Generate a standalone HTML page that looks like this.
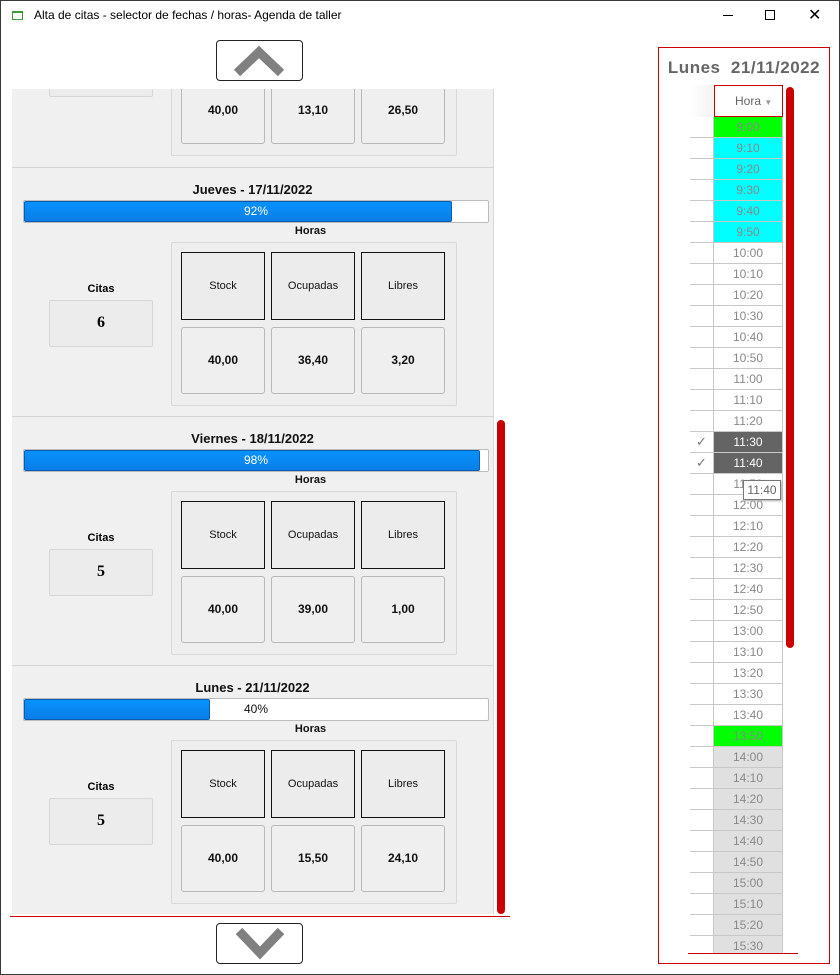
<!DOCTYPE html>
<html><head><meta charset="utf-8"><style>
*{box-sizing:border-box;margin:0;padding:0}
body{width:840px;height:975px;background:#fff;font-family:"Liberation Sans",sans-serif;position:relative;overflow:hidden}
.a{position:absolute}
.win{left:0;top:0;width:840px;height:975px;border:1px solid #3a3a3a}
.ttl{left:34px;top:8px;font-size:12px;color:#000}
.nav{width:87px;height:41px;border:1px solid #222;border-radius:4px;background:#fff}
.panel{left:12px;top:89px;width:481px;height:825px;background:#f0f0f0;overflow:hidden}
.blk{position:absolute;left:0;width:481px;height:249px;border-top:1px solid #d4d4d4}
.t{position:absolute;left:0;width:481px;text-align:center;font-weight:bold;font-size:13px;color:#111}
.bar{position:absolute;left:11px;width:466px;height:23px;border:1px solid #bcbcbc;background:#fff;border-radius:2px;overflow:hidden}
.fill{position:absolute;left:0;top:0;bottom:0;background:linear-gradient(#0892ff,#0a7ee6);border:1px solid #0a5cb0;border-radius:2px}
.pct{position:absolute;left:0;right:0;top:3px;text-align:center;font-size:12px}
.grp{position:absolute;left:159px;width:286px;height:164px;border:1px solid #d8d8d8;border-radius:2px;background:#eeeeee}
.b1{position:absolute;width:84px;height:68px;border:1px solid #111;background:#ececec;font-size:11px;text-align:center;line-height:66px;color:#111}
.b2{position:absolute;width:84px;height:67px;border:1px solid #b8b8b8;border-radius:3px;background:#efefef;font-size:12px;font-weight:bold;text-align:center;line-height:65px;color:#111}
.cl{position:absolute;left:37px;width:104px;text-align:center;font-size:11px;font-weight:bold}
.cb{position:absolute;left:37px;width:104px;height:47px;border:1px solid #d6d6d6;border-radius:2px;background:#ececec;text-align:center;line-height:44px;font-size:16px;font-weight:bold;font-family:"Liberation Serif",serif}
.rp{left:658px;top:47px;width:172px;height:917px;border:1px solid #cc0000}
.rt{left:658px;top:58px;width:172px;text-align:center;font-weight:bold;font-size:17px;color:#666;letter-spacing:0.5px}
.row{position:absolute;left:690px;width:93px;height:21px}
.rh{position:absolute;left:0;top:0;width:24px;height:21px;border-bottom:1px solid #c8c8c8;border-right:1px solid #c8c8c8;background:#fff;color:#777;font-size:13px;text-align:center;line-height:20px}
.rc{position:absolute;left:24px;top:0;width:69px;height:21px;border-bottom:1px solid #c8c8c8;border-right:1px solid #c8c8c8;text-align:center;font-size:12px;line-height:20px;color:#888}
</style></head><body>
<div class="a win"></div>
<div class="a" style="left:12px;top:11px;width:11px;height:9px;border:1px solid #3a9a3a;border-top-width:2px"></div>
<div class="a ttl">Alta de citas - selector de fechas / horas- Agenda de taller</div>
<div class="a" style="left:723px;top:15px;width:10px;height:1px;background:#000"></div>
<div class="a" style="left:765px;top:10px;width:10px;height:10px;border:1px solid #000"></div>
<div class="a" style="left:808px;top:5px;font-size:16px;color:#000">✕</div>

<div class="a nav" style="left:216px;top:40px"><svg width="85" height="39"><polyline points="20,32 42,11 64,32" fill="none" stroke="#808080" stroke-width="9"/></svg></div>

<div class="a panel">
 <div class="blk" style="top:-171px;border-top:none">
  <div class="grp" style="top:74px"></div>
  <div class="cb" style="top:132px"></div>
  <div class="b2" style="left:169px;top:159px">40,00</div><div class="b2" style="left:259px;top:159px">13,10</div><div class="b2" style="left:349px;top:159px">26,50</div>
 </div>
 <div class="blk" style="top:78px">
  <div class="t" style="top:14px">Jueves - 17/11/2022</div>
  <div class="bar" style="top:32px"><div class="fill" style="width:428px"></div><div class="pct" style="color:#fff">92%</div></div>
  <div class="t" style="top:57px;font-size:11px;left:58px">Horas</div>
  <div class="grp" style="top:74px"></div>
  <div class="b1" style="left:169px;top:84px">Stock</div><div class="b1" style="left:259px;top:84px">Ocupadas</div><div class="b1" style="left:349px;top:84px">Libres</div>
  <div class="b2" style="left:169px;top:159px">40,00</div><div class="b2" style="left:259px;top:159px">36,40</div><div class="b2" style="left:349px;top:159px">3,20</div>
  <div class="cl" style="top:115px">Citas</div><div class="cb" style="top:132px">6</div>
 </div>
 <div class="blk" style="top:327px">
  <div class="t" style="top:14px">Viernes - 18/11/2022</div>
  <div class="bar" style="top:32px"><div class="fill" style="width:456px"></div><div class="pct" style="color:#fff">98%</div></div>
  <div class="t" style="top:57px;font-size:11px;left:58px">Horas</div>
  <div class="grp" style="top:74px"></div>
  <div class="b1" style="left:169px;top:84px">Stock</div><div class="b1" style="left:259px;top:84px">Ocupadas</div><div class="b1" style="left:349px;top:84px">Libres</div>
  <div class="b2" style="left:169px;top:159px">40,00</div><div class="b2" style="left:259px;top:159px">39,00</div><div class="b2" style="left:349px;top:159px">1,00</div>
  <div class="cl" style="top:115px">Citas</div><div class="cb" style="top:132px">5</div>
 </div>
 <div class="blk" style="top:576px">
  <div class="t" style="top:14px">Lunes - 21/11/2022</div>
  <div class="bar" style="top:32px"><div class="fill" style="width:186px"></div><div class="pct" style="color:#111">40%</div></div>
  <div class="t" style="top:57px;font-size:11px;left:58px">Horas</div>
  <div class="grp" style="top:74px"></div>
  <div class="b1" style="left:169px;top:84px">Stock</div><div class="b1" style="left:259px;top:84px">Ocupadas</div><div class="b1" style="left:349px;top:84px">Libres</div>
  <div class="b2" style="left:169px;top:159px">40,00</div><div class="b2" style="left:259px;top:159px">15,50</div><div class="b2" style="left:349px;top:159px">24,10</div>
  <div class="cl" style="top:115px">Citas</div><div class="cb" style="top:132px">5</div>
 </div>
</div>
<div class="a" style="left:493px;top:89px;width:1px;height:825px;background:#d8d8d8"></div>
<div class="a" style="left:497px;top:420px;width:8px;height:494px;background:#cc0000;border-radius:4px"></div>
<div class="a" style="left:10px;top:916px;width:500px;height:1px;background:#cc0000"></div>
<div class="a nav" style="left:216px;top:923px"><svg width="85" height="39"><polyline points="22,7 43,29 64,7" fill="none" stroke="#808080" stroke-width="9"/></svg></div>

<div class="a rp"></div>
<div class="a rt">Lunes&nbsp; 21/11/2022</div>
<div class="a" style="left:690px;top:85px;width:25px;height:32px;background:linear-gradient(90deg,#fff,#f2f2f2)"></div>
<div class="a" style="left:714px;top:85px;width:69px;height:32px;border:1px solid #cc0000;background:#fff;font-size:12px;color:#666;line-height:30px;padding-left:20px">Hora <span style="font-size:8px;color:#999">▼</span></div>
<div class="a" style="left:786px;top:87px;width:8px;height:561px;background:#cc0000;border-radius:4px"></div>
<div class="row" style="top:117px"><div class="rh"></div><div class="rc" style="background:#00ff00">9:00</div></div>
<div class="row" style="top:138px"><div class="rh"></div><div class="rc" style="background:#00ffff">9:10</div></div>
<div class="row" style="top:159px"><div class="rh"></div><div class="rc" style="background:#00ffff">9:20</div></div>
<div class="row" style="top:180px"><div class="rh"></div><div class="rc" style="background:#00ffff">9:30</div></div>
<div class="row" style="top:201px"><div class="rh"></div><div class="rc" style="background:#00ffff">9:40</div></div>
<div class="row" style="top:222px"><div class="rh"></div><div class="rc" style="background:#00ffff">9:50</div></div>
<div class="row" style="top:243px"><div class="rh"></div><div class="rc">10:00</div></div>
<div class="row" style="top:264px"><div class="rh"></div><div class="rc">10:10</div></div>
<div class="row" style="top:285px"><div class="rh"></div><div class="rc">10:20</div></div>
<div class="row" style="top:306px"><div class="rh"></div><div class="rc">10:30</div></div>
<div class="row" style="top:327px"><div class="rh"></div><div class="rc">10:40</div></div>
<div class="row" style="top:348px"><div class="rh"></div><div class="rc">10:50</div></div>
<div class="row" style="top:369px"><div class="rh"></div><div class="rc">11:00</div></div>
<div class="row" style="top:390px"><div class="rh"></div><div class="rc">11:10</div></div>
<div class="row" style="top:411px"><div class="rh"></div><div class="rc">11:20</div></div>
<div class="row" style="top:432px"><div class="rh">✓</div><div class="rc" style="background:#646464;color:#fff">11:30</div></div>
<div class="row" style="top:453px"><div class="rh">✓</div><div class="rc" style="background:#646464;color:#fff">11:40</div></div>
<div class="row" style="top:474px"><div class="rh"></div><div class="rc">11:50</div></div>
<div class="row" style="top:495px"><div class="rh"></div><div class="rc">12:00</div></div>
<div class="row" style="top:516px"><div class="rh"></div><div class="rc">12:10</div></div>
<div class="row" style="top:537px"><div class="rh"></div><div class="rc">12:20</div></div>
<div class="row" style="top:558px"><div class="rh"></div><div class="rc">12:30</div></div>
<div class="row" style="top:579px"><div class="rh"></div><div class="rc">12:40</div></div>
<div class="row" style="top:600px"><div class="rh"></div><div class="rc">12:50</div></div>
<div class="row" style="top:621px"><div class="rh"></div><div class="rc">13:00</div></div>
<div class="row" style="top:642px"><div class="rh"></div><div class="rc">13:10</div></div>
<div class="row" style="top:663px"><div class="rh"></div><div class="rc">13:20</div></div>
<div class="row" style="top:684px"><div class="rh"></div><div class="rc">13:30</div></div>
<div class="row" style="top:705px"><div class="rh"></div><div class="rc">13:40</div></div>
<div class="row" style="top:726px"><div class="rh"></div><div class="rc" style="background:#00ff00">13:50</div></div>
<div class="row" style="top:747px"><div class="rh"></div><div class="rc" style="background:#e0e0e0">14:00</div></div>
<div class="row" style="top:768px"><div class="rh"></div><div class="rc" style="background:#e0e0e0">14:10</div></div>
<div class="row" style="top:789px"><div class="rh"></div><div class="rc" style="background:#e0e0e0">14:20</div></div>
<div class="row" style="top:810px"><div class="rh"></div><div class="rc" style="background:#e0e0e0">14:30</div></div>
<div class="row" style="top:831px"><div class="rh"></div><div class="rc" style="background:#e0e0e0">14:40</div></div>
<div class="row" style="top:852px"><div class="rh"></div><div class="rc" style="background:#e0e0e0">14:50</div></div>
<div class="row" style="top:873px"><div class="rh"></div><div class="rc" style="background:#e0e0e0">15:00</div></div>
<div class="row" style="top:894px"><div class="rh"></div><div class="rc" style="background:#e0e0e0">15:10</div></div>
<div class="row" style="top:915px"><div class="rh"></div><div class="rc" style="background:#e0e0e0">15:20</div></div>
<div class="row" style="top:936px;height:17px;overflow:hidden"><div class="rh"></div><div class="rc" style="background:#e0e0e0">15:30</div></div>
<div class="a" style="left:688px;top:953px;width:110px;height:1px;background:#cc0000"></div>
<div class="a" style="left:743px;top:480px;width:38px;height:20px;border:1px solid #777;background:#fff;font-size:12px;color:#666;text-align:center;line-height:18px;box-shadow:1px 1px 2px #aaa">11:40</div>
</body></html>
